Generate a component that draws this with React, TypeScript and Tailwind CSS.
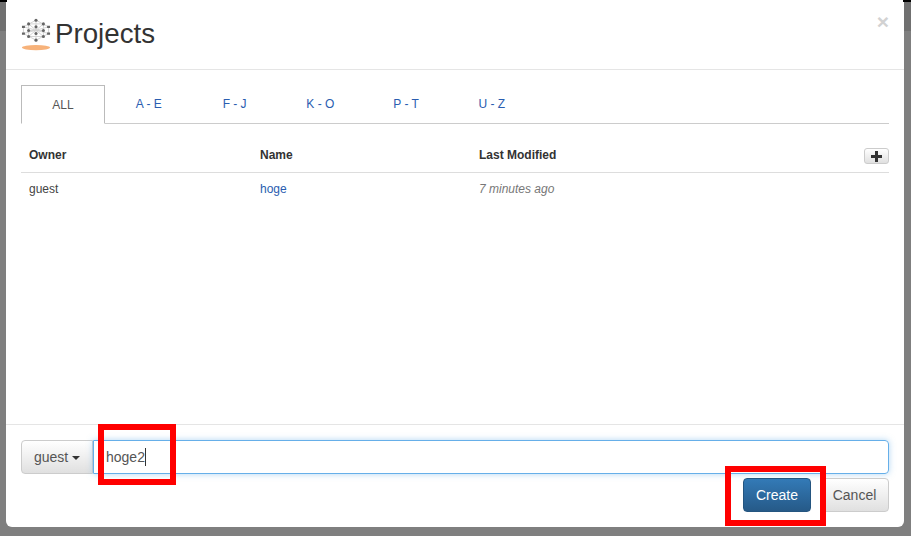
const tabs = ['A - E', 'F - J', 'K - O', 'P - T', 'U - Z']

function Logo() {
	const nodes = [
		[20, 3], [20, 12], [20, 21], [20, 30],
		[10, 8], [10, 17], [10, 25],
		[30, 8], [30, 17], [30, 25],
	]
	return (
		<svg width="30" height="34" viewBox="0 0 40 46" className="shrink-0">
			<g stroke="#cfcfcf" strokeWidth="1.2" fill="none">
				<path d="M20 3 3 12 3 21 20 30 37 21 37 12ZM20 3 20 30M3 12 37 21M3 21 37 12M10 8 30 25M30 8 10 25M10 8 30 8M10 17 30 17M10 25 30 25M10 8 10 25M30 8 30 25" />
			</g>
			{nodes.map(([cx, cy]) => (
				<circle key={`${cx}-${cy}`} cx={cx} cy={cy} r="2.1" fill="#666" />
			))}
			<path d="M1 12h4M1 21h4M35 12h4M35 21h4" stroke="#666" strokeWidth="3" />
			<ellipse cx="20" cy="40" rx="19" ry="3.6" fill="#f7b27a" />
		</svg>
	)
}

export default function App() {
	return (
		<div className="relative h-[536px] w-[911px] overflow-hidden bg-[linear-gradient(#707070_31px,#7f7f7f_31px)] font-['Liberation_Sans',Arial,sans-serif] text-xs text-[#444]">
			<div className="ml-[6px] flex h-[527px] w-[898px] flex-col rounded-b-md bg-white">
				<div className="relative flex h-[70px] items-center border-b border-[#e5e5e5] pl-[15px]">
					<Logo />
					<h3 className="mb-[2px] ml-[4px] text-[27.7px] leading-none text-[#333]">Projects</h3>
					<span className="absolute right-[15px] top-[11px] text-[21px] font-bold leading-[21px] text-[#d2d2d2]">×</span>
				</div>

				<div className="flex-1 px-[15px] pt-[15px]">
					<div className="flex h-[39px] border-b border-[#ccc]">
						<div className="mr-[1px] h-[39px] w-[84px] border border-[#bbb] border-b-white bg-white text-center leading-[38px] text-[#555]">
							ALL
						</div>
						{tabs.map((tab) => (
							<div key={tab} className="w-[85.75px] text-center leading-[38px] text-[#2a5db0]">
								{tab}
							</div>
						))}
					</div>

					<div className="flex h-[49px] items-end border-b border-[#ddd] pb-[9px] pl-[8px] font-bold text-[#333]">
						<div className="w-[231px]">Owner</div>
						<div className="w-[219px]">Name</div>
						<div className="flex-1">Last Modified</div>
						<button className="mb-[-1px] flex h-[16px] w-[25px] items-center justify-center rounded-[3px] border border-[#ccc] bg-gradient-to-b from-white to-[#e0e0e0]">
							<svg width="11" height="11" viewBox="0 0 11 11">
								<path d="M4 0h3v4h4v3H7v4H4V7H0V4h4z" fill="#333" />
							</svg>
						</button>
					</div>

					<div className="flex h-[32px] items-center pl-[8px]">
						<div className="w-[231px]">guest</div>
						<div className="w-[219px] text-[#2a5db0]">hoge</div>
						<div className="italic text-[#777]">7 minutes ago</div>
					</div>
				</div>

				<div className="h-[103px] border-t border-[#e5e5e5] px-[15px] pt-[15px]">
					<div className="flex h-[34px]">
						<button className="flex w-[72px] items-center justify-center gap-[4px] rounded-l border border-[#ccc] bg-gradient-to-b from-white to-[#e0e0e0] text-sm text-[#555]">
							guest
							<span className="mt-[1px] border-x-4 border-t-4 border-x-transparent border-t-[#333]" />
						</button>
						<div className="flex flex-1 items-center rounded-r border border-[#66afe9] pl-[12px] text-sm text-[#555] shadow-[0_0_6px_rgba(102,175,233,0.5)]">
							hoge2
							<span className="h-[18px] w-px bg-[#333]" />
						</div>
					</div>
					<div className="mt-[4px] flex justify-end gap-[9px]">
						<button className="h-[34px] w-[68px] rounded border border-[#245580] bg-gradient-to-b from-[#337ab7] to-[#265a88] text-sm text-white">
							Create
						</button>
						<button className="h-[34px] w-[69px] rounded border border-[#ccc] bg-gradient-to-b from-white to-[#e0e0e0] text-sm text-[#555]">
							Cancel
						</button>
					</div>
				</div>
			</div>

			<div className="absolute left-0 top-0 h-[2px] w-[7px] bg-black" />
			<div className="absolute right-0 top-0 h-[2px] w-[8px] bg-black" />
			<div className="absolute left-[98px] top-[424px] h-[61px] w-[78px] border-[6px] border-[#ff0000]" />
			<div className="absolute left-[725px] top-[466px] h-[60px] w-[101px] border-[6px] border-[#ff0000]" />
		</div>
	)
}
